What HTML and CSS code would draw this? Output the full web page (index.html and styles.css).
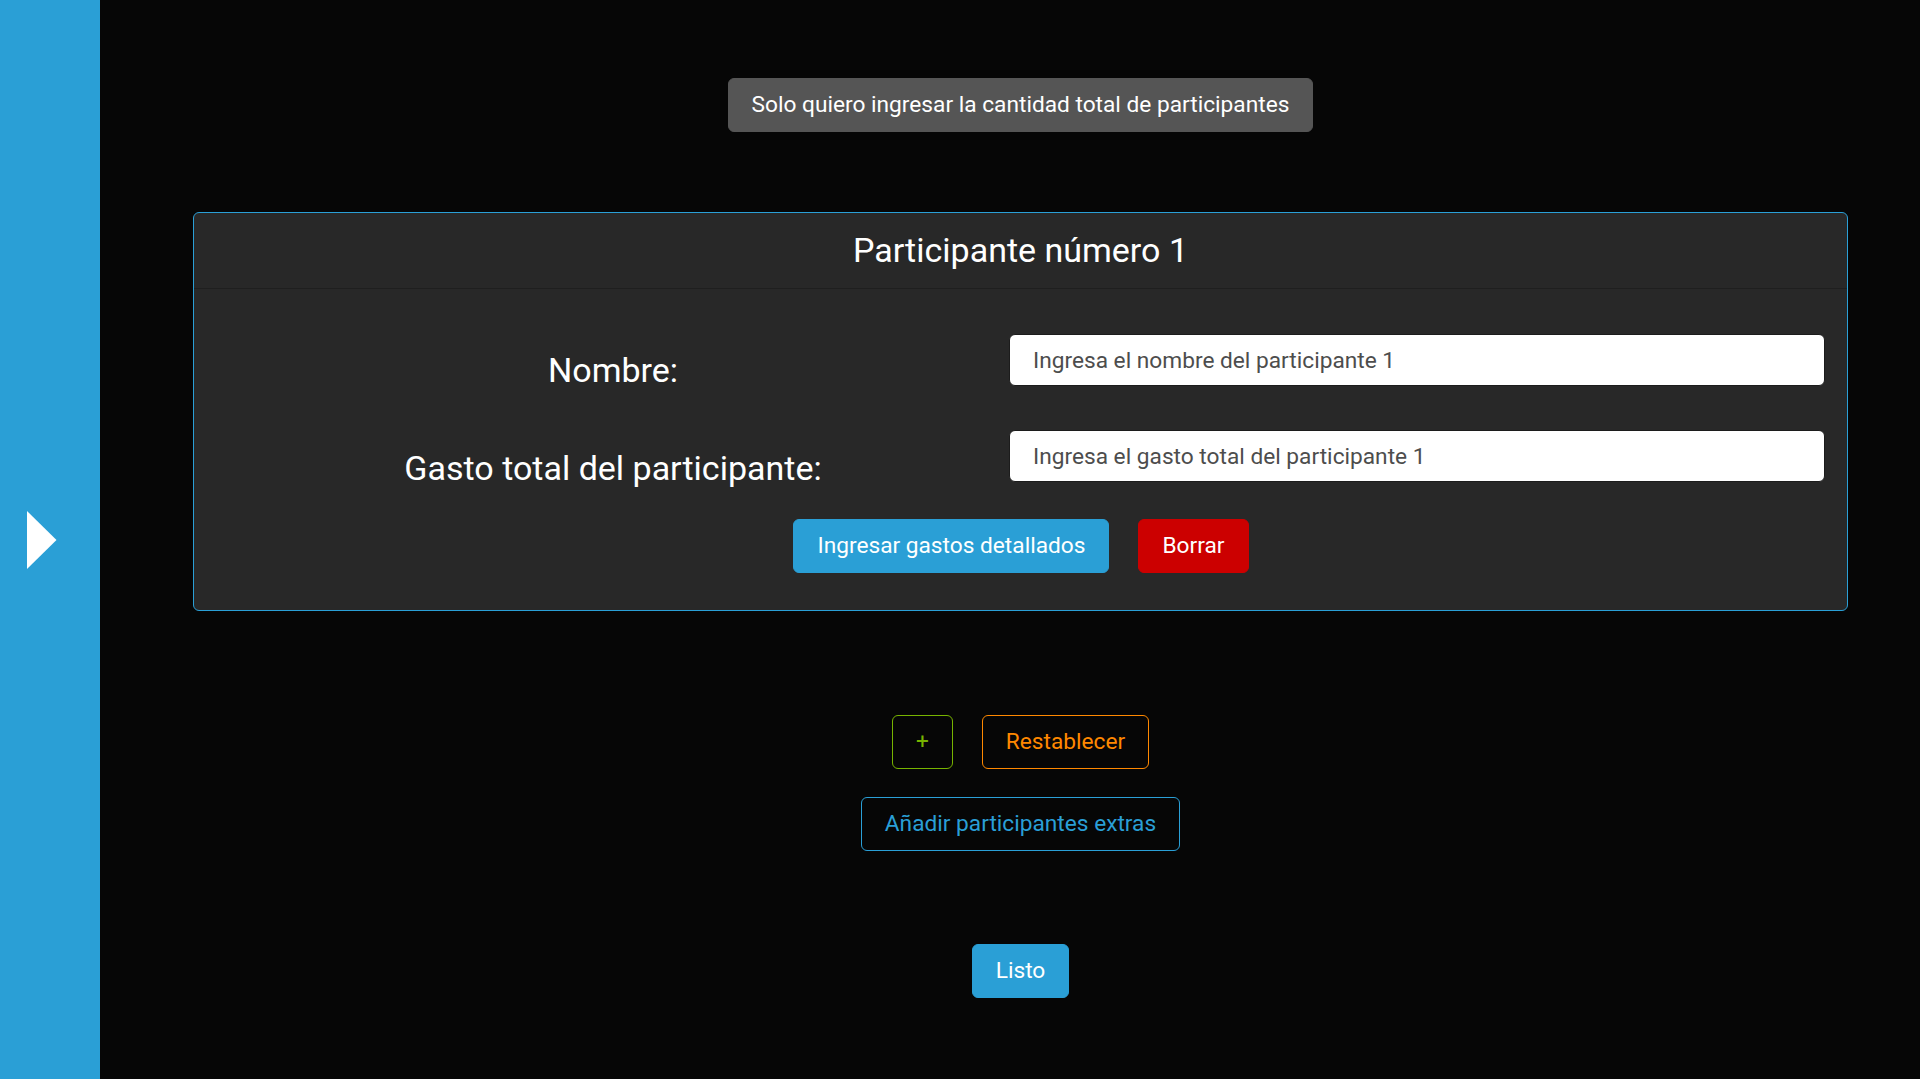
FILE: index.html
```html
<!DOCTYPE html>
<html lang="es">
<head>
<meta charset="utf-8">
<title>Participantes</title>
<link rel="stylesheet" href="styles.css">
</head>
<body>
<div class="app">
  <aside class="sidebar">
    <svg class="toggle" width="30" height="58" viewBox="0 0 30 58" aria-hidden="true">
      <polygon points="0,0 29.5,29 0,58" fill="#ffffff"/>
    </svg>
  </aside>
  <main class="main">
    <button class="btn btn-secondary">Solo quiero ingresar la cantidad total de participantes</button>

    <section class="card">
      <header class="card-header">Participante número 1</header>
      <div class="card-body">
        <div class="form-grid">
          <label class="field-label" for="nombre1">Nombre:</label>
          <input id="nombre1" class="form-control" type="text" placeholder="Ingresa el nombre del participante 1">
          <label class="field-label second" for="gasto1">Gasto total del participante:</label>
          <input id="gasto1" class="form-control" type="text" placeholder="Ingresa el gasto total del participante 1">
        </div>
        <div class="btn-row card-actions">
          <button class="btn btn-primary">Ingresar gastos detallados</button>
          <button class="btn btn-danger">Borrar</button>
        </div>
      </div>
    </section>

    <div class="btn-row bottom-actions">
      <button class="btn btn-outline-success">+</button>
      <button class="btn btn-outline-warning">Restablecer</button>
    </div>
    <button class="btn btn-outline-primary extras">Añadir participantes extras</button>
    <button class="btn btn-primary listo">Listo</button>
  </main>
</div>
</body>
</html>
```

FILE: styles.css
```css
* {
  box-sizing: border-box;
}

html, body {
  margin: 0;
  padding: 0;
  height: 100%;
}

body {
  background: #060606;
  color: #ffffff;
  font-family: Roboto, "Liberation Sans", sans-serif;
  overflow: hidden;
}

.app {
  display: flex;
  height: 100vh;
}

.sidebar {
  width: 100px;
  flex: 0 0 100px;
  background: #2a9fd6;
  display: flex;
  align-items: center;
  padding-left: 27px;
}

.toggle {
  display: block;
}

.main {
  flex: 1;
  display: flex;
  flex-direction: column;
  align-items: center;
  padding: 78px 0 0 21px;
}

.btn {
  font-family: Roboto, "Liberation Sans", sans-serif;
  font-size: 22.7px;
  line-height: 34px;
  padding: 9px 23px;
  border: 1px solid transparent;
  border-radius: 6px;
  cursor: pointer;
  background: transparent;
  color: #ffffff;
  white-space: nowrap;
}

.btn-secondary {
  background: #555555;
  border-color: #555555;
}

.btn-primary {
  background: #2a9fd6;
  border-color: #2a9fd6;
}

.btn-danger {
  background: #cc0000;
  border-color: #cc0000;
}

.btn-outline-success {
  color: #77b300;
  border-color: #77b300;
}

.btn-outline-warning {
  color: #ff8800;
  border-color: #ff8800;
}

.btn-outline-primary {
  color: #2a9fd6;
  border-color: #2a9fd6;
}

.card {
  width: calc(100% - 144px);
  margin-top: 80px;
  background: #282828;
  border: 1px solid #2a9fd6;
  border-radius: 6px;
}

.card-header {
  height: 76px;
  line-height: 75px;
  text-align: center;
  font-size: 34px;
  border-bottom: 1px solid #1f1f1f;
}

.card-body {
  padding: 45px 22px 37px 23px;
}

.form-grid {
  display: grid;
  grid-template-columns: 792fr 816fr;
  grid-auto-rows: 52px;
  row-gap: 44px;
  align-items: start;
}

.field-label {
  text-align: center;
  font-size: 34px;
  line-height: 1.2;
  padding-top: 16px;
}

.field-label.second {
  padding-top: 18px;
}

.form-control {
  height: 52px;
  width: 100%;
  background: #ffffff;
  border: 1px solid #1c1c1c;
  border-radius: 6px;
  padding: 0 23px;
  font-family: Roboto, "Liberation Sans", sans-serif;
  font-size: 22.7px;
  color: #222222;
}

.form-control::placeholder {
  color: #4d4d4d;
  opacity: 1;
}

.btn-row {
  display: flex;
  justify-content: center;
  gap: 29px;
}

.card-actions {
  margin-top: 37px;
}

.bottom-actions {
  margin-top: 104px;
}

.extras {
  margin-top: 28px;
}

.listo {
  margin-top: 93px;
}
```
